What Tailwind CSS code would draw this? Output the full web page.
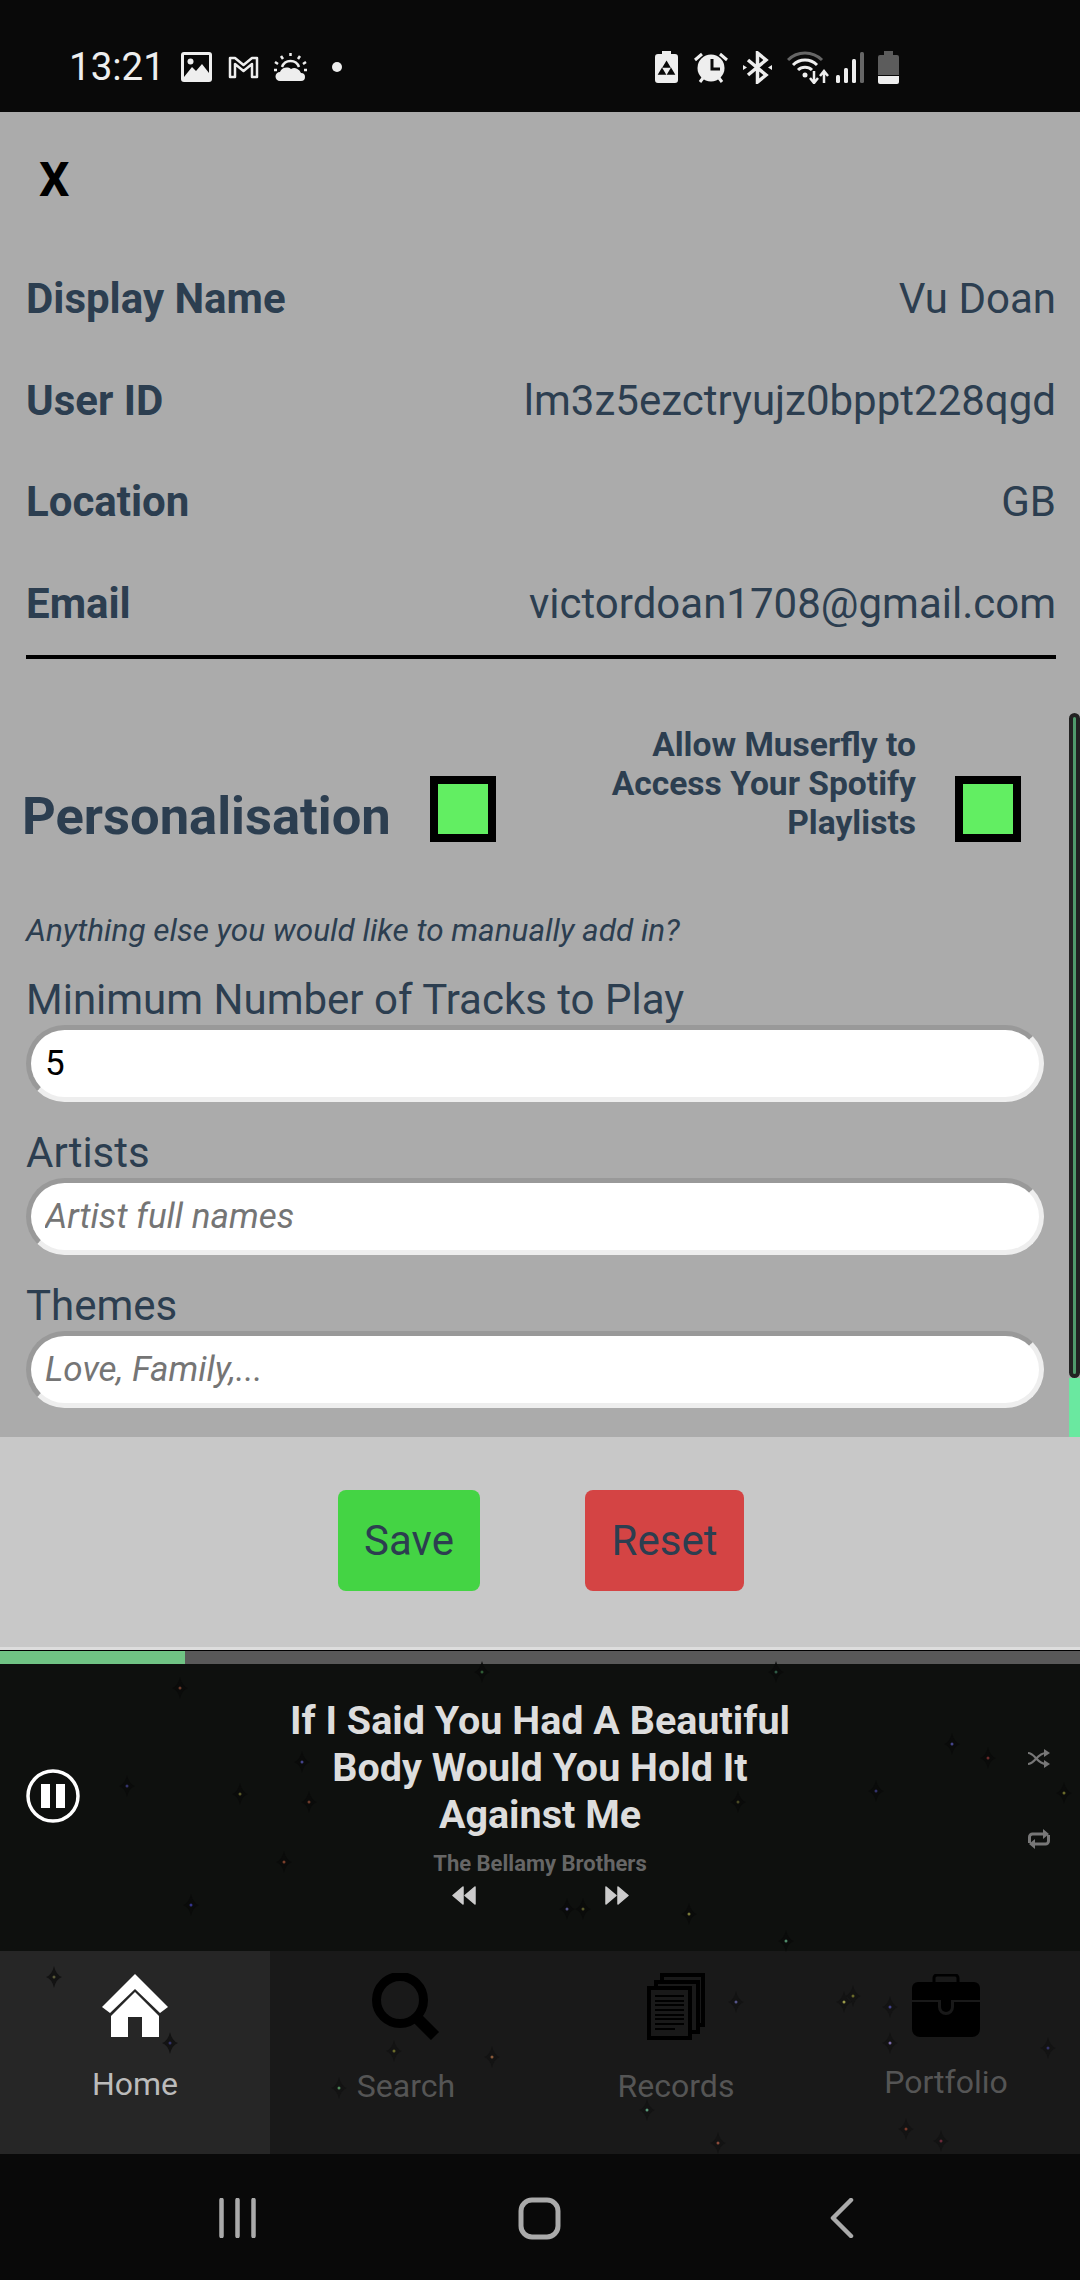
<!DOCTYPE html>
<html lang="en">
<head>
<meta charset="UTF-8">
<title>Muserfly</title>
<script src="https://cdn.jsdelivr.net/npm/@tailwindcss/browser@4"></script>
</head>
<body class="font-['Roboto',sans-serif] bg-[#090909]">
<div class="relative w-[1080px] h-[2280px] overflow-hidden flex flex-col">

  <!-- status bar -->
  <div class="h-[112px] shrink-0 bg-[#090909] flex items-center text-[#eeeeee] pl-[69px] pt-[22px]">
    <span class="text-[38.500px] leading-none w-[112px]">13:21</span>
    <svg class="w-[31px] h-[30px]" viewBox="0 0 31 30"><rect width="31" height="30" rx="3" fill="#eee"/><rect x="3" y="3" width="25" height="24" fill="#090909"/><path d="M3 25 L11 15 L15 19 L21 12 L28 21 V27 H3Z" fill="#eee"/><circle cx="9.500" cy="9.500" r="3" fill="#eee"/></svg>
    <svg class="w-[31px] h-[24px] ml-[16px]" viewBox="0 0 31 24"><path d="M2 22 V3 H7 L15.500 10 L24 3 H29 V22 H24 V9 L15.500 16 L7 9 V22Z" fill="none" stroke="#eee" stroke-width="2.500" stroke-linejoin="round"/></svg>
    <svg class="w-[33px] h-[28px] ml-[15px]" viewBox="0 0 33 28"><path d="M6 28 a4 4 0 0 1 0-9 a7 7 0 0 1 11-3 a7 7 0 0 1 10 4 a4 4 0 0 1 0 8Z" fill="#eee"/><path d="M8 14 a9 9 0 0 1 17 0" fill="none" stroke="#eee" stroke-width="2.500"/><path d="M16.500 0 V3 M7 3 L9 6 M26 3 L24 6 M1 9 L4 11 M32 9 L29 11 M0 17 H3 M30 17 H33" stroke="#eee" stroke-width="2.500"/></svg>
    <span class="w-[10px] h-[10px] rounded-full bg-[#eeeeee] ml-[25px]"></span>
    <div class="flex-1"></div>
  </div>
  <!-- status icons, right group -->
  <div class="absolute left-[655px] top-[50px] flex items-center h-[34px]">
    <svg class="w-[23px] h-[32px]" viewBox="0 0 23 32"><path d="M7 0 H16 V3 H20 a3 3 0 0 1 3 3 V29 a3 3 0 0 1-3 3 H3 a3 3 0 0 1-3-3 V6 a3 3 0 0 1 3-3 H7Z" fill="#eee"/><path d="M11.500 11 L14.500 16 H8.500Z M7 18 L10 23 H4Z M16 18 L19 23 H13Z" fill="#090909" stroke="#090909" stroke-width="1.500"/></svg>
    <svg class="w-[34px] h-[32px] ml-[16px]" viewBox="0 0 34 32"><circle cx="17" cy="17" r="13.500" fill="#eee"/><path d="M18 8 V18 H26" fill="none" stroke="#090909" stroke-width="3"/><path d="M1 9 L8 3 M33 9 L26 3 M6 31 L9 27 M28 31 L25 27" stroke="#eee" stroke-width="3"/></svg>
    <svg class="w-[29px] h-[33px] ml-[15px]" viewBox="0 0 29 33"><path d="M5 9 L23 24 L14.500 31 V2 L23 9 L5 24" fill="none" stroke="#eee" stroke-width="3.500"/><path d="M0 14 L4 16.500 L0 19Z M29 14 L25 16.500 L29 19Z" fill="#eee"/></svg>
    <svg class="w-[43px] h-[33px] ml-[15px]" viewBox="0 0 43 33"><path d="M1 9 a24 24 0 0 1 34 0" fill="none" stroke="#666" stroke-width="3"/><path d="M6 14 a17 17 0 0 1 24 0 M11 19 a10 10 0 0 1 14 0" fill="none" stroke="#eee" stroke-width="3"/><circle cx="18" cy="24" r="2.500" fill="#eee"/><path d="M27 20 V32 M23 27 L27 32 L31 27 M37 32 V20 M33 25 L37 20 L41 25" fill="none" stroke="#eee" stroke-width="2.500"/></svg>
    <svg class="w-[29px] h-[31px] ml-[6px]" viewBox="0 0 29 31"><rect x="0" y="23" width="4" height="8" rx="1.500" fill="#eee"/><rect x="8" y="16" width="4" height="15" rx="1.500" fill="#eee"/><rect x="16" y="7" width="4" height="24" rx="1.500" fill="#eee"/><rect x="24" y="0" width="4" height="31" rx="1.500" fill="#666"/></svg>
    <svg class="w-[21px] h-[33px] ml-[13px]" viewBox="0 0 21 33"><path d="M6 0 H15 V4 H19 a2 2 0 0 1 2 2 V24 H0 V6 a2 2 0 0 1 2-2 H6Z" fill="#5c5c5c"/><path d="M0 25 H21 V31 a2 2 0 0 1-2 2 H2 a2 2 0 0 1-2-2Z" fill="#eee"/></svg>
  </div>

  <!-- settings panel -->
  <main class="h-[1325px] shrink-0 bg-[#ababab] text-[#2c3e50] flex flex-col">
    <div class="h-[136px] shrink-0 pl-[39px] pt-[40px] text-[48px] leading-[56px] font-bold text-black">X</div>

    <div class="mx-[26px] w-[1030px] flex flex-col border-b-4 border-black text-[42px]">
      <div class="h-[101.500px] flex items-center justify-between"><span class="font-bold">Display Name</span><span>Vu Doan</span></div>
      <div class="h-[101.500px] flex items-center justify-between"><span class="font-bold">User ID</span><span>lm3z5ezctryujz0bppt228qgd</span></div>
      <div class="h-[101.500px] flex items-center justify-between"><span class="font-bold">Location</span><span>GB</span></div>
      <div class="h-[102.750px] flex items-center justify-between"><span class="font-bold">Email</span><span>victordoan1708@gmail.com</span></div>
    </div>

    <div class="h-[238px] shrink-0 flex items-start pl-[22px]">
      <h2 class="text-[52.500px] font-bold leading-[56px] w-[408px] mt-[129px]">Personalisation</h2>
      <span class="w-[66px] h-[66px] mt-[117px] border-[8px] border-black bg-[#62ee62]"></span>
      <p class="w-[420px] mt-[66px] text-right text-[33.600px] leading-[39px] font-bold">Allow Muserfly to<br>Access Your Spotify<br>Playlists</p>
      <span class="ml-[39px] mt-[117px] w-[66px] h-[66px] border-[8px] border-black bg-[#62ee62]"></span>
    </div>

    <form class="flex flex-col px-[26px] w-[1070px]">
      <p class="text-[31.500px] italic leading-[36px] mt-[16px]">Anything else you would like to manually add in?</p>
      <label class="text-[42px] leading-[48px] mt-[27px]">Minimum Number of Tracks to Play</label>
      <input value="5" class="h-[77px] mt-[1px] rounded-full border-[5px] border-t-[#999999] border-l-[#999999] border-b-[#eeeeee] border-r-[#eeeeee] bg-white text-black text-[35px] pl-[14px] outline-none">
      <label class="text-[42px] leading-[48px] mt-[27px]">Artists</label>
      <input placeholder="Artist full names" class="h-[77px] mt-[1px] rounded-full border-[5px] border-t-[#999999] border-l-[#999999] border-b-[#eeeeee] border-r-[#eeeeee] bg-white text-[35px] pl-[14px] outline-none placeholder:italic placeholder:text-[#757575]">
      <label class="text-[42px] leading-[48px] mt-[27px]">Themes</label>
      <input placeholder="Love, Family,..." class="h-[77px] mt-[1px] rounded-full border-[5px] border-t-[#999999] border-l-[#999999] border-b-[#eeeeee] border-r-[#eeeeee] bg-white text-[35px] pl-[14px] outline-none placeholder:italic placeholder:text-[#757575]">
    </form>
  </main>

  <!-- scrollbar -->
  <div class="absolute left-[1069px] top-[1378px] w-[11px] h-[59px] bg-[#6ae8a0]"></div>
  <div class="absolute left-[1069px] top-[713px] w-[11px] h-[665px] bg-[#4f9a6b] border-[4px] border-[#222222] rounded-t-[6px] rounded-b-[6px]"></div>

  <!-- save / reset -->
  <div class="h-[213px] shrink-0 bg-[#c8c8c8] border-b-[3px] border-b-[#dddddd] flex items-start pt-[53px] pl-[338px] text-[42px] text-[#2c3e50]">
    <button class="w-[142px] h-[101px] rounded-[8px] bg-[#44d444]">Save</button>
    <button class="w-[159px] h-[101px] rounded-[8px] bg-[#d44444] ml-[105px]">Reset</button>
  </div>

  <!-- progress -->
  <div class="h-[14px] shrink-0 bg-[#595959] border-t-[1px] border-t-black"><div class="w-[185px] h-full bg-[#70c484]"></div></div>

  <!-- player -->
  <section class="h-[287px] shrink-0 bg-[#0e100e] relative flex flex-col items-center text-center">
    <h1 class="text-[39.500px] leading-[47px] font-bold text-[#dddddd] mt-[33px] w-[540px]">If I Said You Had A Beautiful Body Would You Hold It Against Me</h1>
    <p class="text-[22px] font-bold text-[#666666] leading-[28px] mt-[12px]">The Bellamy Brothers</p>
    <div class="flex gap-[129px] mt-[8px]">
      <svg class="w-[24px] h-[19px]" viewBox="0 0 24 19"><path d="M1 9.500 L11 1 V18Z M13 9.500 L23 1 V18Z" fill="#cccccc" stroke="#cccccc" stroke-width="1.500" stroke-linejoin="round"/></svg>
      <svg class="w-[24px] h-[19px]" viewBox="0 0 24 19"><path d="M23 9.500 L13 1 V18Z M11 9.500 L1 1 V18Z" fill="#cccccc" stroke="#cccccc" stroke-width="1.500" stroke-linejoin="round"/></svg>
    </div>
    <svg class="absolute left-[26px] top-[105px] w-[54px] h-[54px]" viewBox="0 0 54 54"><circle cx="27" cy="27" r="25" fill="none" stroke="#fff" stroke-width="3.500"/><rect x="15" y="15" width="9" height="24" fill="#fff"/><rect x="30" y="15" width="9" height="24" fill="#fff"/></svg>
    <svg class="absolute left-[1028px] top-[85px] w-[22px] h-[19px]" viewBox="0 0 22 19"><path d="M0 4 C7 4 9 15 18 15 M0 15 C7 15 9 4 18 4" fill="none" stroke="#777" stroke-width="2.200"/><path d="M16 0 L22 4 L16 8Z M16 11 L22 15 L16 19Z" fill="#777"/></svg>
    <svg class="absolute left-[1028px] top-[165px] w-[22px] h-[20px]" viewBox="0 0 22 20"><path d="M1.500 14 V8 a3 3 0 0 1 3-3 H17 M20.500 6 V12 a3 3 0 0 1-3 3 H5" fill="none" stroke="#777" stroke-width="3"/><path d="M15 0 L21 5 L15 10Z M7 10 L1 15 L7 20Z" fill="#777"/></svg>
  </section>

  <!-- tabs -->
  <nav class="h-[203px] shrink-0 bg-[#191919] grid grid-cols-4 text-[32px] text-[#555555] text-center">
    <div class="bg-[#262626] text-[#bbbbbb] flex flex-col items-center pt-[23px]">
      <svg class="w-[66px] h-[63px]" viewBox="0 0 66 63"><path d="M33 0 L66 33 L58 39 L33 15 L8 39 L0 33Z" fill="#fff"/><path d="M33 18 L57 42 V63 H40 V43 H26 V63 H9 V42Z" fill="#fff"/></svg>
      <span class="mt-[29px] leading-[36px]">Home</span>
    </div>
    <div class="flex flex-col items-center pt-[22px] pl-[2px]">
      <svg class="w-[68px] h-[67px]" viewBox="0 0 68 67"><circle cx="28" cy="27" r="23.500" fill="none" stroke="#000" stroke-width="9"/><path d="M43 43 L63 63" stroke="#000" stroke-width="11.500"/></svg>
      <span class="mt-[28px] leading-[36px]">Search</span>
    </div>
    <div class="flex flex-col items-center pt-[22px] pl-[2px]">
      <svg class="w-[58px] h-[67px]" viewBox="0 0 58 67"><g fill="#191919" stroke="#000" stroke-width="4"><rect x="15" y="2" width="41" height="50"/><rect x="9" y="9" width="42" height="50"/><rect x="2" y="15" width="41" height="50"/></g><path d="M8 23 H37 M8 28 H37 M8 32 H37 M8 37 H37 M8 42 H37 M8 46 H37 M8 51 H37 M8 56 H28" stroke="#000" stroke-width="2"/></svg>
      <span class="mt-[28px] leading-[36px]">Records</span>
    </div>
    <div class="flex flex-col items-center pt-[23px] pl-[2px]">
      <svg class="w-[68px] h-[63px]" viewBox="0 0 68 63"><path d="M22 9 V4 a3 3 0 0 1 3-3 H43 a3 3 0 0 1 3 3 V9" fill="none" stroke="#000" stroke-width="3"/><path d="M6 8 H62 a6 6 0 0 1 6 6 V26 H0 V14 a6 6 0 0 1 6-6Z" fill="#000"/><path d="M0 28 H26 V33 a8 8 0 0 0 16 0 V28 H68 V55 a8 8 0 0 1-8 8 H8 a8 8 0 0 1-8-8Z" fill="#000"/><path d="M29 26 H39 V33 a5 5 0 0 1-10 0Z" fill="#000"/></svg>
      <span class="mt-[27px] leading-[36px]">Portfolio</span>
    </div>
  </nav>

  <!-- android nav -->
  <div class="h-[127px] shrink-0 bg-[#090909] relative">
    <svg class="absolute left-[219px] top-[44px] w-[37px] h-[40px]" viewBox="0 0 37 40"><path d="M2.500 2 V38 M18.500 2 V38 M34.500 2 V38" stroke="#aaa" stroke-width="4.500" stroke-linecap="round"/></svg>
    <svg class="absolute left-[518px] top-[43px] w-[43px] h-[43px]" viewBox="0 0 43 43"><rect x="3" y="3" width="37" height="37" rx="11" fill="none" stroke="#aaa" stroke-width="5"/></svg>
    <svg class="absolute left-[830px] top-[44px] w-[24px] h-[40px]" viewBox="0 0 24 40"><path d="M21 2 L3 20 L21 38" fill="none" stroke="#aaa" stroke-width="4.500" stroke-linecap="round" stroke-linejoin="round"/></svg>
  </div>

  <!-- starfield over player and tabs -->
  <svg class="absolute left-0 top-0 w-[1080px] h-[2280px] pointer-events-none" viewBox="0 0 1080 2280">
    <defs>
      <path id="star" d="M0 -11 Q2 -2 8 0 Q2 2 0 11 Q-2 2 -8 0 Q-2 -2 0 -11Z" fill="#0a0b0a"/>
      <path id="star2" d="M0 -11 Q2 -2 8 0 Q2 2 0 11 Q-2 2 -8 0 Q-2 -2 0 -11Z" fill="#131313"/>
    </defs>
    <g>
      <use href="#star" x="180" y="1688"/><circle cx="180" cy="1688" r="1.500" fill="#6b3a2a"/>
      <use href="#star" x="482" y="1672"/><circle cx="482" cy="1672" r="1.500" fill="#2f5a35"/>
      <use href="#star" x="776" y="1672"/><circle cx="776" cy="1672" r="1.500" fill="#2f5a45"/>
      <use href="#star" x="302" y="1762"/><circle cx="302" cy="1762" r="1.500" fill="#44448a"/>
      <use href="#star" x="127" y="1786"/><circle cx="127" cy="1786" r="1.500" fill="#33336a"/>
      <use href="#star" x="240" y="1794"/><circle cx="240" cy="1794" r="1.500" fill="#5a5a2a"/>
      <use href="#star" x="309" y="1802"/><circle cx="309" cy="1802" r="1.500" fill="#6b3a2a"/>
      <use href="#star" x="738" y="1802"/><circle cx="738" cy="1802" r="1.500" fill="#4a4a25"/>
      <use href="#star" x="876" y="1791"/><circle cx="876" cy="1791" r="1.500" fill="#33336a"/>
      <use href="#star" x="952" y="1744"/><circle cx="952" cy="1744" r="1.500" fill="#44448a"/>
      <use href="#star" x="988" y="1758"/><circle cx="988" cy="1758" r="1.500" fill="#6b2a2a"/>
      <use href="#star" x="1064" y="1793"/><circle cx="1064" cy="1793" r="1.500" fill="#6a6a2a"/>
      <use href="#star" x="284" y="1862"/><circle cx="284" cy="1862" r="1.500" fill="#7a3f2a"/>
      <use href="#star" x="191" y="1905"/><circle cx="191" cy="1905" r="1.500" fill="#33338a"/>
      <use href="#star" x="567" y="1909"/><circle cx="567" cy="1909" r="1.500" fill="#55558a"/>
      <use href="#star" x="583" y="1909"/><circle cx="583" cy="1909" r="1.500" fill="#5a5a2a"/>
      <use href="#star" x="689" y="1914"/><circle cx="689" cy="1914" r="1.500" fill="#7a7a3a"/>
      <use href="#star" x="786" y="1941"/><circle cx="786" cy="1941" r="1.500" fill="#4f8a6a"/>
      <use href="#star2" x="54" y="1977"/><circle cx="54" cy="1977" r="1.500" fill="#5a5a3a"/>
      <use href="#star2" x="170" y="2043"/><circle cx="170" cy="2043" r="1.500" fill="#33336a"/>
      <use href="#star2" x="394" y="2051"/><circle cx="394" cy="2051" r="1.500" fill="#6a6a2a"/>
      <use href="#star2" x="492" y="2057"/><circle cx="492" cy="2057" r="1.500" fill="#8a5a3a"/>
      <use href="#star2" x="339" y="2088"/><circle cx="339" cy="2088" r="1.500" fill="#4f8a5a"/>
      <use href="#star2" x="647" y="2110"/><circle cx="647" cy="2110" r="1.500" fill="#5a9a7a"/>
      <use href="#star2" x="718" y="2143"/><circle cx="718" cy="2143" r="1.500" fill="#8a4a3a"/>
      <use href="#star2" x="736" y="2002"/><circle cx="736" cy="2002" r="1.500" fill="#55558a"/>
      <use href="#star2" x="853" y="1996"/><circle cx="853" cy="1996" r="1.500" fill="#6a6a2a"/>
      <use href="#star2" x="844" y="2002"/><circle cx="844" cy="2002" r="1.500" fill="#9a9a4a"/>
      <use href="#star2" x="890" y="2007"/><circle cx="890" cy="2007" r="1.500" fill="#44448a"/>
      <use href="#star2" x="890" y="2043"/><circle cx="890" cy="2043" r="1.500" fill="#7a6aaa"/>
      <use href="#star2" x="1048" y="2048"/><circle cx="1048" cy="2048" r="1.500" fill="#33336a"/>
      <use href="#star2" x="906" y="2129"/><circle cx="906" cy="2129" r="1.500" fill="#7a3a2a"/>
      <use href="#star2" x="941" y="2141"/><circle cx="941" cy="2141" r="1.500" fill="#6b2a3a"/>
    </g>
  </svg>
</div>
</body>
</html>
